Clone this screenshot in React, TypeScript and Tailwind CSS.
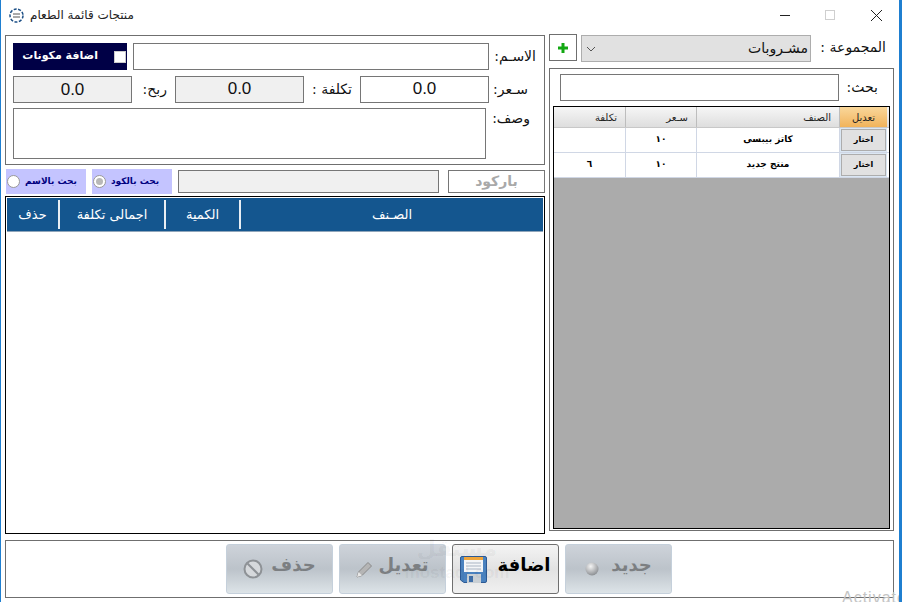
const arabic = "font-['DejaVu_Sans',sans-serif]";

function Disk() {
  return (
    <svg width="27" height="27" viewBox="0 0 27 27">
      <path d="M2 .5h23a1.500 1.500 0 0 1 1.500 1.500v23a1.500 1.500 0 0 1-1.500 1.500H4L.5 24V2A1.500 1.500 0 0 1 2 .5z" fill="#4a82bf" stroke="#2d5a94" />
      <rect x="4" y="1" width="19" height="15" fill="#f4f6f8" />
      <rect x="4" y="1" width="19" height="3" fill="#f0a63c" />
      <path d="M6 7h15M6 10h15M6 13h15" stroke="#a9b4c2" strokeWidth="1" />
      <rect x="7" y="18" width="14" height="9" fill="#c9cfd4" />
      <rect x="9" y="20" width="4" height="6" fill="#3f6ea8" />
    </svg>
  );
}

function Pencil() {
  return (
    <svg width="17" height="17" viewBox="0 0 17 17">
      <path d="M1 16l1.500-5L12 1.500 15.500 5 6 14.500z" fill="#b5b5b5" stroke="#8a8a8a" strokeWidth="1" />
      <path d="M1 16l1.500-5L6 14.500z" fill="#e8e8e8" />
    </svg>
  );
}

function NoSign() {
  return (
    <svg width="20" height="20" viewBox="0 0 20 20">
      <circle cx="10" cy="10" r="8.500" fill="#d6d9dc" stroke="#8e9296" strokeWidth="2" />
      <path d="M4.500 4.500l11 11" stroke="#8e9296" strokeWidth="2" />
    </svg>
  );
}

function Ball() {
  return (
    <svg width="14" height="14" viewBox="0 0 14 14">
      <defs>
        <radialGradient id="ball" cx="40%" cy="30%" r="70%">
          <stop offset="0%" stopColor="#f4f4f4" />
          <stop offset="100%" stopColor="#8d9094" />
        </radialGradient>
      </defs>
      <circle cx="7" cy="7" r="6.500" fill="url(#ball)" />
    </svg>
  );
}

function ActionButton({ label, icon, enabled, gap }: { label: string; icon: React.ReactNode; enabled?: boolean; gap: string }) {
  return (
    <div
      className={
        enabled
          ? `w-[107px] h-[50px] flex items-center justify-center rounded-[3px] border border-[#6f6f6f] bg-gradient-to-b from-[#f4f4f4] via-[#e2e2e2] to-[#f0f0f0] ${gap}`
          : `w-[107px] h-[50px] flex items-center justify-center rounded-[3px] border border-[#c5d0db] bg-gradient-to-b from-[#ced3da] via-[#bcc3ca] to-[#dde4e8] ${gap}`
      }
    >
      {icon}
      <span className={enabled ? `${arabic} mb-[9px] text-[18px] font-bold text-black` : `${arabic} mb-[9px] text-[18px] font-bold text-[#7c7f82]`}>
        {label}
      </span>
    </div>
  );
}

function Field({ width, value, gray, extra }: { width: string; value?: string; gray?: boolean; extra?: string }) {
  return (
    <div
      className={`${width} h-[27px] flex items-center justify-center border border-[#767676] text-[17px] text-[#111] font-['Liberation_Sans',sans-serif] ${gray ? "bg-[#f0f0f0]" : "bg-white"} ${extra ?? ""}`}
    >
      {value}
    </div>
  );
}

function Label({ text, width, extra }: { text: string; width: string; extra?: string }) {
  return (
    <div dir="rtl" className={`${arabic} ${width} text-[14px] text-[#111] text-right ${extra ?? ""}`}>
      {text}
    </div>
  );
}

const productCols = ["w-[72px]", "w-[71px]", "w-[143px]", "w-[47px]"];

function ProductRow({ cost, price, name }: { cost: string; price: string; name: string }) {
  return (
    <div className="flex h-[25px] bg-white border-b border-[#d0d7e5] text-[9px] font-bold text-black">
      <div className={`${productCols[0]} ${arabic} flex items-center justify-center border-r border-[#d0d7e5]`}>{cost}</div>
      <div className={`${productCols[1]} ${arabic} flex items-center justify-center border-r border-[#d0d7e5]`}>{price}</div>
      <div className={`${productCols[2]} ${arabic} flex items-center justify-center border-r border-[#d0d7e5]`}>{name}</div>
      <div className={`${productCols[3]} flex items-center justify-center bg-[#dbe7f3]`}>
        <div className={`${arabic} w-[45px] h-[22px] flex items-center justify-center border border-[#adadad] bg-[#e1e1e1] text-[8px]`}>اختار</div>
      </div>
    </div>
  );
}

export default function App() {
  return (
    <div className="relative w-[902px] h-[602px] overflow-hidden bg-white border-l border-r-[3px] border-[#1f7fd0]">
      <div className="h-[30px] flex items-center justify-between">
        <div className="flex items-center gap-[6px] pl-[8px]">
          <svg width="15" height="15" viewBox="0 0 15 15">
            <circle cx="7.500" cy="7.500" r="6.500" fill="none" stroke="#1c4f86" strokeWidth="1.500" strokeDasharray="3 1.500" />
            <path d="M4 6h7M4 9h7" stroke="#555" strokeWidth="1" />
          </svg>
          <span className={`${arabic} text-[12px] text-[#222]`}>منتجات قائمة الطعام</span>
        </div>
        <div className="flex items-center gap-[35px] pr-[16px]">
          <div className="w-[10px] h-px bg-[#222]" />
          <div className="w-[10px] h-[10px] border border-[#cfcfcf]" />
          <svg width="13" height="13" viewBox="0 0 13 13">
            <path d="M1 1l11 11M12 1L1 12" stroke="#222" strokeWidth="1" />
          </svg>
        </div>
      </div>

      <div className="flex gap-[4px] pl-[4px] h-[505px]">
        <div className="w-[540px] flex flex-col">
          <div className="h-[130px] mt-[5px] border border-[#6f6f6f] pl-[7px] pr-[8px] pt-[7px] flex flex-col">
            <div className="flex items-center">
              <div className="w-[114px] h-[27px] bg-[#000046] flex items-center justify-end gap-[16px] pr-[1px]">
                <span className={`${arabic} mb-[1px] text-[11px] font-bold text-white`}>اضافة مكونات</span>
                <div className="w-[12px] h-[12px] bg-white border border-[#ccc]" />
              </div>
              <Field width="w-[356px]" extra="ml-[6px]" />
              <Label text="الاسـم:" width="flex-1" />
            </div>
            <div className="flex items-center mt-[5px]">
              <Field width="w-[119px]" value="0.0" gray extra="mt-[1px]" />
              <Label text="ربح:" width="w-[35px]" />
              <div className="w-[8px]" />
              <Field width="w-[129px]" value="0.0" gray />
              <Label text="تكلفة :" width="w-[48px]" />
              <div className="w-[8px]" />
              <Field width="w-[129px]" value="0.0" />
              <Label text="سـعر:" width="flex-1" extra="pr-[8px]" />
            </div>
            <div className="flex items-start mt-[5px]">
              <div className="w-[473px] h-[51px] border border-[#767676] bg-white" />
              <Label text="وصف:" width="flex-1" extra="pr-[6px]" />
            </div>
          </div>

          <div className="h-[25px] mt-[4px] flex items-center pl-[1px]">
            <div className="w-[80px] h-[25px] bg-[#c4c4ff] flex items-center gap-[5px] pl-[1px]">
              <div className="w-[13px] h-[13px] rounded-full bg-white border border-[#999]" />
              <span className={`${arabic} text-[9px] font-bold text-[#000080]`}>بحث بالاسم</span>
            </div>
            <div className="w-[80px] h-[25px] ml-[6px] bg-[#c4c4ff] flex items-center gap-[5px] pl-[1px]">
              <div className="w-[13px] h-[13px] rounded-full bg-white border border-[#999] flex items-center justify-center">
                <div className="w-[7px] h-[7px] rounded-full bg-[#b8b8b8]" />
              </div>
              <span className={`${arabic} text-[9px] font-bold text-[#000080]`}>بحث بالكود</span>
            </div>
            <div className="w-[261px] h-[23px] ml-[6px] border border-[#767676] bg-[#f0f0f0]" />
            <div className="w-[97px] h-[23px] ml-[9px] border border-[#767676] bg-white flex items-center justify-center">
              <span className={`${arabic} text-[14px] font-bold text-[#a9a9a9]`}>باركود</span>
            </div>
          </div>

          <div className="h-[338px] mt-[2px] border border-black bg-white pt-[1px] px-[1px]">
            <div className="h-[34px] flex bg-[#14568f] text-white text-[13px] border-b border-[#8fa5ba]">
              <div className={`${arabic} w-[51px] pt-[1px] flex items-center justify-center`}>حذف</div>
              <div className={`${arabic} w-[106px] my-[2px] pt-[1px] flex items-center justify-center border-l-2 border-[#e8eef4]`}>اجمالى تكلفة</div>
              <div className={`${arabic} w-[75px] my-[2px] pt-[1px] flex items-center justify-center border-l-2 border-[#e8eef4]`}>الكمية</div>
              <div className={`${arabic} flex-1 my-[2px] pt-[1px] flex items-center justify-center border-l-2 border-[#e8eef4]`}>الصـنف</div>
            </div>
          </div>
        </div>

        <div className="w-[345px] flex flex-col">
          <div className="h-[27px] mt-[4px] flex items-center">
            <div className="w-[28px] h-[27px] border border-[#6f6f6f] flex items-center justify-center">
              <svg width="10" height="10" viewBox="0 0 10 10">
                <path d="M3.500 0h3v3.500H10v3H6.500V10h-3V6.500H0v-3h3.500z" fill="#12a812" />
              </svg>
            </div>
            <div className="w-[230px] h-[27px] ml-[4px] mt-[2px] border border-[#adadad] bg-[#e1e1e1] flex items-center justify-between pl-[4px] pr-[2px]">
              <svg width="10" height="6" viewBox="0 0 10 6">
                <path d="M1 1l4 4 4-4" fill="none" stroke="#555" strokeWidth="1" />
              </svg>
              <span className={`${arabic} text-[14px] text-[#111]`}>مشـروبات</span>
            </div>
            <span dir="rtl" className={`${arabic} flex-1 pr-[8px] text-right text-[14px] text-[#111]`}>المجموعة :</span>
          </div>

          <div className="h-[463px] mt-[7px] border border-[#6f6f6f] pl-[3px] pr-[3px] flex flex-col">
            <div className="flex items-center h-[27px] mt-[5px] pl-[7px]">
              <Field width="w-[279px]" />
              <Label text="بحث:" width="w-[41px]" extra="pr-[2px]" />
            </div>
            <div className="flex-1 mt-[5px] mb-[1px] border border-black bg-[#ababab]">
              <div className={`${arabic} flex h-[21px] text-[10px] text-[#222] bg-gradient-to-b from-[#f6f6f6] to-[#dedede] border-b border-[#c8c8c8]`}>
                <div className={`${productCols[0]} flex items-center justify-end pr-[8px] border-r border-[#bdbdbd]`}>تكلفة</div>
                <div className={`${productCols[1]} flex items-center justify-end pr-[8px] border-r border-[#bdbdbd]`}>سـعر</div>
                <div className={`${productCols[2]} flex items-center justify-end pr-[8px] border-r border-[#bdbdbd]`}>الصنف</div>
                <div className={`${productCols[3]} flex items-center justify-center bg-gradient-to-b from-[#f9d79a] to-[#f1b35a]`}>تعديل</div>
              </div>
              <ProductRow cost="" price="١٠" name="كاتز بيبسى" />
              <ProductRow cost="٦" price="١٠" name="منتج جديد" />
            </div>
          </div>
        </div>
      </div>

      <div className="ml-[4px] mt-[5px] w-[889px] h-[58px] border border-[#6f6f6f] flex items-center gap-[6px] pl-[220px]">
        <ActionButton label="حذف" icon={<NoSign />} gap="gap-[8px]" />
        <ActionButton label="تعديل" icon={<Pencil />} gap="gap-[5px]" />
        <ActionButton label="اضافة" icon={<Disk />} enabled gap="gap-[10px]" />
        <ActionButton label="جديد" icon={<Ball />} gap="gap-[12px]" />
      </div>

      {/* watermark and the OS activation note sit over the window */}
      <div className="absolute left-[396px] top-[534px] w-[120px] flex flex-col items-center pointer-events-none text-black/5">
        <span className={`${arabic} text-[22px] font-bold leading-[30px]`}>مستقل</span>
        <span className="font-['Liberation_Sans',sans-serif] text-[17px] font-bold leading-[18px]">mostaql.com</span>
      </div>
      <span className="absolute left-[841px] top-[589px] font-['Liberation_Sans',sans-serif] text-[16px] leading-[18px] tracking-[1px] text-[#c4c4c4] whitespace-nowrap">
        Activate
      </span>
    </div>
  );
}
